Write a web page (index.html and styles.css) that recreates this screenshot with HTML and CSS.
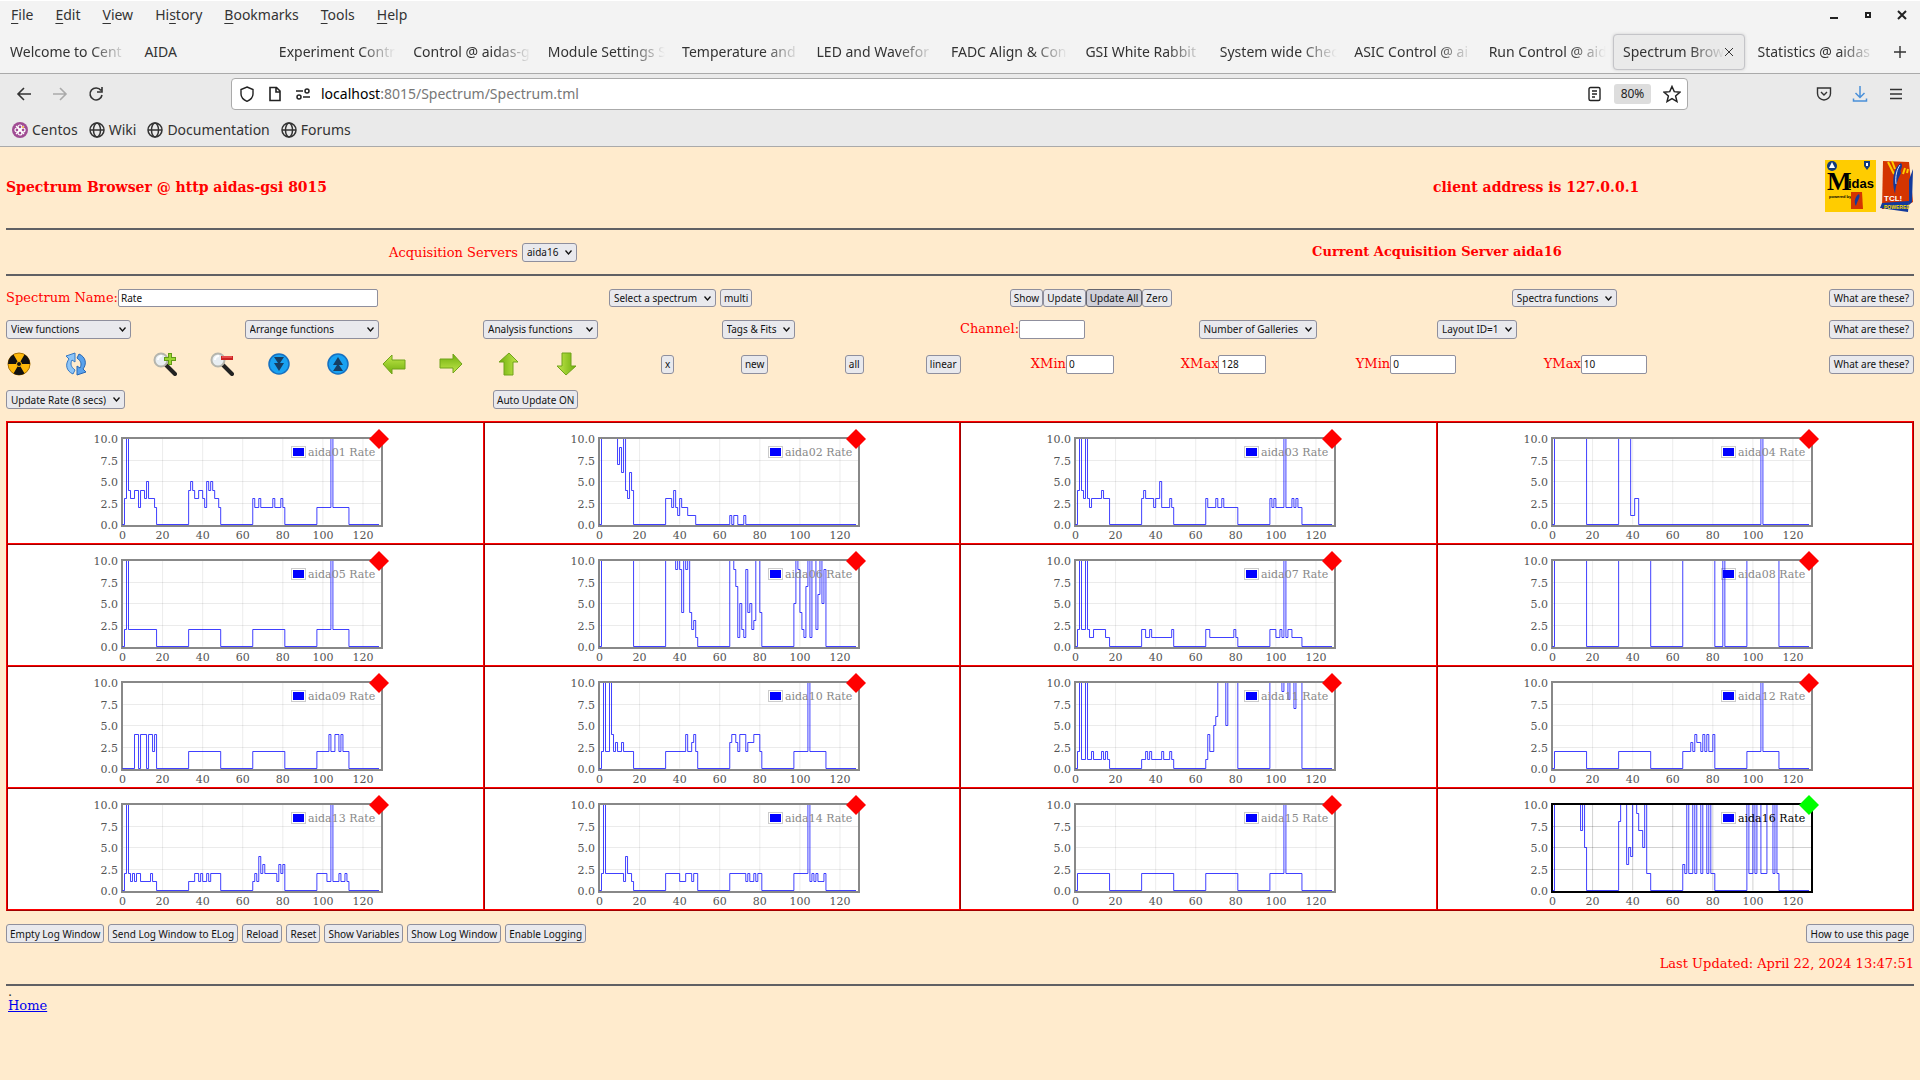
FILE: index.html
```html
<!DOCTYPE html>
<html lang="en">
<head>
<meta charset="utf-8">
<title>Spectrum Browser @ http aidas-gsi 8015</title>
<link rel="stylesheet" href="styles.css">
</head>
<body>
<header class="browser">
  <div class="menubar">
    <nav class="menus">
      <button class="menu"><u>F</u>ile</button>
      <button class="menu"><u>E</u>dit</button>
      <button class="menu"><u>V</u>iew</button>
      <button class="menu">Hi<u>s</u>tory</button>
      <button class="menu"><u>B</u>ookmarks</button>
      <button class="menu"><u>T</u>ools</button>
      <button class="menu"><u>H</u>elp</button>
    </nav>
    <div class="window-controls">
      <button aria-label="Minimize"><svg width="10" height="10"><path d="M1 8h8" stroke="#222" stroke-width="2"/></svg></button>
      <button aria-label="Maximize"><svg width="10" height="10"><rect x="3" y="3" width="4" height="4" fill="#fff" stroke="#222" stroke-width="2"/></svg></button>
      <button aria-label="Close window"><svg width="10" height="10"><path d="M1 1l8 8M9 1l-8 8" stroke="#222" stroke-width="2"/></svg></button>
    </div>
  </div>
  <div class="tabs">
    <div class="tab"><span class="fade">Welcome to Cent</span></div>
    <div class="tab"><span>AIDA</span></div>
    <div class="tab"><span class="fade">Experiment Contr</span></div>
    <div class="tab"><span class="fade">Control @ aidas-g</span></div>
    <div class="tab"><span class="fade">Module Settings S</span></div>
    <div class="tab"><span class="fade">Temperature and</span></div>
    <div class="tab"><span class="fade">LED and Wavefor</span></div>
    <div class="tab"><span class="fade">FADC Align &amp; Con</span></div>
    <div class="tab"><span class="fade">GSI White Rabbit</span></div>
    <div class="tab"><span class="fade">System wide Chec</span></div>
    <div class="tab"><span class="fade">ASIC Control @ ai</span></div>
    <div class="tab"><span class="fade">Run Control @ aid</span></div>
    <div class="tab active"><span class="fade">Spectrum Brow</span><button class="tab-close" aria-label="Close tab"><svg width="8" height="8"><path d="M0 0l8 8M8 0l-8 8" stroke="#333" stroke-width="1"/></svg></button></div>
    <div class="tab"><span class="fade">Statistics @ aidas</span></div>
    <button class="new-tab" aria-label="New tab"><svg width="12" height="12"><path d="M6 0v12M0 6h12" stroke="#333" stroke-width="1.4"/></svg></button>
  </div>
  <div class="toolbar">
    <div class="nav-buttons">
      <button aria-label="Back"><svg width="16" height="16" fill="none" stroke="#333" stroke-width="1.6"><path d="M15 8H2M8 2L2 8l6 6"/></svg></button>
      <button aria-label="Forward"><svg width="16" height="16" fill="none" stroke="#aaa" stroke-width="1.6"><path d="M1 8h13M8 2l6 6-6 6"/></svg></button>
      <button aria-label="Reload"><svg width="16" height="16" fill="none" stroke="#333" stroke-width="1.6"><path d="M13 4.5A6 6 0 1 0 14 9M14 1v5H9"/></svg></button>
    </div>
    <div class="urlbar">
      <svg width="16" height="16" fill="none" stroke="#222" stroke-width="1.4"><path d="M8 1l6 2.500v4.500c0 3-3 6-6 7.300C5 14 2 11 2 8V3.500z"/></svg>
      <svg width="16" height="16" fill="none" stroke="#222" stroke-width="1.600"><path d="M3 1.500h6.500L13 5v9.500H3zM9 2v4h4"/></svg>
      <svg width="16" height="16" fill="none" stroke="#222" stroke-width="1.500"><path d="M1 5h7M8 11h7"/><circle cx="12" cy="5" r="2"/><circle cx="4" cy="11" r="2"/></svg>
      <span class="url"><b>localhost</b>:8015/Spectrum/Spectrum.tml</span>
      <svg width="16" height="16" fill="none" stroke="#222" stroke-width="1.400"><rect x="3" y="1.500" width="11" height="13" rx="1.500"/><path d="M6 5h5M6 8h5M6 11h3"/></svg>
      <button class="zoom">80%</button>
      <svg width="18" height="18" viewBox="0 0 16 16" fill="none" stroke="#222" stroke-width="1.300"><path d="M8 1.300l2 4.600 5 .5-3.800 3.300 1.200 5L8 12.100l-4.400 2.600 1.200-5L1 6.400l5-.5z"/></svg>
    </div>
    <div class="tool-buttons">
      <button aria-label="Pocket"><svg width="16" height="16" fill="none" stroke="#333" stroke-width="1.400"><path d="M1.500 2h13v5.500a6.500 6.500 0 0 1-13 0zM5 6l3 3 3-3"/></svg></button>
      <button aria-label="Downloads"><svg width="16" height="16" fill="none" stroke="#4a90d9" stroke-width="1.500"><path d="M8 0v11M3.500 7L8 11.500 12.500 7M1.500 12.500v2.500h13v-2.500"/></svg></button>
      <button aria-label="Application menu"><svg width="16" height="16" stroke="#333" stroke-width="1.500"><path d="M2 3.500h12M2 8h12M2 12.500h12"/></svg></button>
    </div>
  </div>
  <nav class="bookmarks">
    <a href="#"><svg width="16" height="16"><circle cx="8" cy="8" r="8" fill="#a04c93"/><g fill="none" stroke="#fff" stroke-width="1.200"><circle cx="8" cy="5" r="2"/><circle cx="8" cy="11" r="2"/><circle cx="5" cy="8" r="2"/><circle cx="11" cy="8" r="2"/><path d="M4 4l8 8M12 4l-8 8"/></g><circle cx="11" cy="5" r="1" fill="#f2b632"/></svg>Centos</a>
    <a href="#"><svg class="globe" width="16" height="16"><use href="#globe"/></svg>Wiki</a>
    <a href="#"><svg class="globe" width="16" height="16"><use href="#globe"/></svg>Documentation</a>
    <a href="#"><svg class="globe" width="16" height="16"><use href="#globe"/></svg>Forums</a>
  </nav>
</header>

<svg class="defs" width="0" height="0" aria-hidden="true">
  <defs>
    <symbol id="globe" viewBox="0 0 16 16"><g fill="none" stroke="#333" stroke-width="1.500"><circle cx="8" cy="8" r="7"/><ellipse cx="8" cy="8" rx="3.500" ry="7"/><path d="M1 8h14"/></g></symbol>
    <linearGradient id="green" x1="0" y1="0" x2="0" y2="1"><stop offset="0" stop-color="#c3e84c"/><stop offset="1" stop-color="#6fae0c"/></linearGradient>
    <symbol id="arrow" viewBox="0 0 24 24"><path d="M1 12L10 3v5h13v9H10v5z" fill="url(#green)" stroke="#71a31b"/></symbol>
    <symbol id="disc" viewBox="0 0 24 24"><circle cx="12" cy="12" r="10" fill="#19a2f2" stroke="#1670c0" stroke-width="1.500"/><path d="M7 5h10l-4 6h4l-5 8-5-8h4z" fill="#163e63"/></symbol>
    <symbol id="lens" viewBox="0 0 24 24"><path d="M13 13l9 9" stroke="#222" stroke-width="4" stroke-linecap="round"/><circle cx="8" cy="8" r="6.500" fill="#e8eef2" stroke="#b5b5ad" stroke-width="2"/><path d="M5 8a4 4 0 0 1 4-4" stroke="#fff" stroke-width="2" fill="none"/></symbol>
  </defs>
</svg>

<main class="page">
  <div class="title-row">
    <h1>Spectrum Browser @ http aidas-gsi 8015</h1>
    <h2>client address is 127.0.0.1</h2>
    <div class="logos">
      <svg width="51" height="52" viewBox="0 0 51 52">
        <rect width="51" height="52" fill="#fc0"/>
        <circle cx="7" cy="6" r="5" fill="#123a7c"/><path d="M4 8h6L7 2z" fill="#fff"/>
        <path d="M39 1h6v5l-3 4-3-4z" fill="#123a7c"/><path d="M41 3h2v3h-2z" fill="#fff"/>
        <text x="2" y="30" class="midas-m">M</text><text x="23" y="28" class="midas-rest">idas</text>
        <text x="4" y="38" class="midas-small">powered by</text>
        <path d="M26 32h11l1 17H26z" fill="#d43500"/><path d="M31 46c-3-4 0-11 3-12 2 3-2 7-3 12z" fill="#123a9c"/>
      </svg>
      <svg width="34" height="52" viewBox="0 0 34 52">
        <path d="M3 1l26 1 4 40-13 7H2z" fill="#d43500"/><path d="M33 9l-1 33-3 3V20z" fill="#123a9c"/>
        <path d="M2 43l27-2-1 11L0 48z" fill="#123a9c"/>
        <path d="M8 2l6 12M12 1l3 8M25 8l-2 6M28 9l-1 4" stroke="#fc0" stroke-width="2"/>
        <path d="M15 34C11 20 14 7 21 3c3 4-2 7 0 10-3 6-5 10-6 21z" fill="#123a9c"/><path d="M16 24C15 16 17 9 20 5" stroke="#d5e1ff" fill="none"/>
        <text x="4" y="41" class="tcl">TCL!</text><text x="4" y="49" class="powered">POWERED</text>
      </svg>
    </div>
  </div>
  <hr>
  <div class="servers">
    <div><label for="server">Acquisition Servers</label> <select id="server"><option>aida16</option></select></div>
    <div><strong>Current Acquisition Server aida16</strong></div>
  </div>
  <hr>

  <form class="controls">
    <div class="row row-spectrum">
      <div><label for="name">Spectrum Name:</label><input id="name" class="name-input" value="Rate"></div>
      <div class="spaced"><select aria-label="Spectrum"><option>Select a spectrum</option></select><button type="button">multi</button></div>
      <div><button type="button">Show</button><button type="button">Update</button><button type="button" class="pressed">Update All</button><button type="button">Zero</button></div>
      <div><select aria-label="Spectra functions"><option>Spectra functions</option></select></div>
      <div><button type="button" class="about">What are these?</button></div>
    </div>
    <div class="row row-functions">
      <div><select class="view" aria-label="View functions"><option>View functions</option></select></div>
      <div><select class="arrange" aria-label="Arrange functions"><option>Arrange functions</option></select></div>
      <div><select class="analysis" aria-label="Analysis functions"><option>Analysis functions</option></select></div>
      <div><select aria-label="Tags and fits"><option>Tags &amp; Fits</option></select></div>
      <div><label for="channel">Channel:</label><input id="channel" class="wide"></div>
      <div><select aria-label="Number of galleries"><option>Number of Galleries</option></select></div>
      <div><select aria-label="Layout"><option>Layout ID=1</option></select></div>
      <div class="end"><button type="button" class="about">What are these?</button></div>
    </div>
    <div class="row row-icons">
      <div><button type="button" class="icon" aria-label="Start"><svg width="24" height="24"><circle cx="12" cy="12" r="11" fill="#ffb90a" stroke="#a86f00"/><path d="M12 12L1 12A11 11 0 0 1 6.500 2.500zM12 12L17.500 2.500A11 11 0 0 1 23 12zM12 12L17.500 21.500A11 11 0 0 1 6.500 21.500z" fill="#111"/><circle cx="12" cy="12" r="2.500" fill="#111" stroke="#ffb90a"/></svg></button></div>
      <div><button type="button" class="icon" aria-label="Refresh"><svg width="24" height="24"><path d="M9 22C2 19 1 12 5 7L2 4l9-3v9L8 8c-2 4-1 7 3 10z" fill="#8ec5f7" stroke="#3578c4"/><path d="M15 2c7 3 8 10 4 15l3 3-9 3v-9l3 2c2-4 1-7-3-10z" fill="#5aa2ec" stroke="#2866b2"/></svg></button></div>
      <div><button type="button" class="icon" aria-label="Zoom in"><svg width="24" height="24"><use href="#lens"/><path d="M17 1v12M11 7h12" stroke="#629b17" stroke-width="4"/><path d="M17 2v10M12 7h10" stroke="#9bd531" stroke-width="2"/></svg></button></div>
      <div><button type="button" class="icon" aria-label="Zoom out"><svg width="24" height="24"><use href="#lens"/><path d="M11 6h12" stroke="#c22" stroke-width="4"/><path d="M12 5h10" stroke="#f77" stroke-width="1"/></svg></button></div>
      <div><button type="button" class="icon" aria-label="Compress"><svg width="24" height="24"><use href="#disc"/></svg></button></div>
      <div><button type="button" class="icon flip" aria-label="Expand"><svg width="24" height="24"><use href="#disc"/></svg></button></div>
      <div><button type="button" class="icon" aria-label="Left"><svg width="24" height="24"><use href="#arrow"/></svg></button></div>
      <div><button type="button" class="icon turn-right" aria-label="Right"><svg width="24" height="24"><use href="#arrow"/></svg></button></div>
      <div><button type="button" class="icon turn-up" aria-label="Up"><svg width="24" height="24"><use href="#arrow"/></svg></button></div>
      <div><button type="button" class="icon turn-down" aria-label="Down"><svg width="24" height="24"><use href="#arrow"/></svg></button></div>
      <div><button type="button">x</button></div>
      <div><button type="button">new</button></div>
      <div><button type="button">all</button></div>
      <div><button type="button">linear</button></div>
      <div><label for="xmin">XMin</label><input id="xmin" value="0"></div>
      <div><label for="xmax">XMax</label><input id="xmax" value="128"></div>
      <div><label for="ymin">YMin</label><input id="ymin" class="wide" value="0"></div>
      <div><label for="ymax">YMax</label><input id="ymax" class="wide" value="10"></div>
      <div class="end"><button type="button" class="about">What are these?</button></div>
    </div>
    <div class="row row-update">
      <div><select aria-label="Update rate"><option>Update Rate (8 secs)</option></select></div>
      <div><button type="button">Auto Update ON</button></div>
    </div>
  </form>

  <section class="gallery" id="gallery" aria-label="Spectra"></section>

  <div class="log-row">
    <button>Empty Log Window</button>
    <button>Send Log Window to ELog</button>
    <button>Reload</button>
    <button>Reset</button>
    <button>Show Variables</button>
    <button>Show Log Window</button>
    <button>Enable Logging</button>
    <button class="help">How to use this page</button>
  </div>
  <p class="updated">Last Updated: April 22, 2024 13:47:51</p>
  <hr>
  <footer class="foot"><div class="dot">.</div><a href="#">Home</a></footer>
</main>
<script src="gallery.js"></script>
</body>
</html>
```
FILE: styles.css
```css
* { box-sizing: border-box; }
body { margin: 0; min-height: 100vh; background: #ffebcd; font: 13px/16px "DejaVu Serif", serif; color: #f00; }
button, select, input { margin: 0; font: 10px/14px "Noto Sans", sans-serif; color: #111; }
svg { display: block; flex: none; }
.defs { position: absolute; }

/* Browser window */
.browser { font: 14px/20px "Noto Sans", sans-serif; color: #333; background: #f3f3f3; border-bottom: 1px solid #aaa; }
.browser button { font: inherit; color: inherit; border: 0; padding: 0; background: none; }
.menubar { height: 31px; display: flex; align-items: center; justify-content: space-between; border-top: 1px solid #fff; padding: 0 13px 2px 0; }
.menus { display: flex; }
.browser .menu { padding: 0 11px; }
.menu u { text-underline-offset: 3px; }
.window-controls { display: flex; gap: 24px; }
.tabs { height: 43px; display: flex; align-items: center; border-bottom: 1px solid #aaa; padding: 0 14px 0 0; }
.tab { flex: 1 1 0; min-width: 0; height: 36px; display: flex; align-items: center; padding: 0 4px 0 9px; margin-right: 2px; border: 1px solid transparent; border-radius: 4px; }
.tab span { flex: 1; min-width: 0; overflow: hidden; white-space: nowrap; }
.tab .fade { mask-image: linear-gradient(to left, transparent, #000 36px); }
.tab.active { background: #eaeaea; border-color: #c4c4c8; box-shadow: 0 0 3px #ccc; }
.browser .tab-close { flex: none; padding-right: 7px; }
.new-tab { flex: none; margin-left: 12px; }
.toolbar { height: 40px; display: flex; align-items: center; background: #eaeaea; padding: 0 16px; }
.nav-buttons { display: flex; gap: 20px; flex: 0 0 215px; }
.urlbar { flex: 1; height: 32px; display: flex; align-items: center; gap: 12px; background: #fff; border: 1px solid #aaa; border-radius: 4px; padding: 0 6px 0 7px; }
.url { flex: 1; margin-left: -2px; color: #777; }
.url b { color: #000; font-weight: 400; }
.urlbar .zoom { width: 37px; height: 20px; font-size: 12px; line-height: 20px; background: #ddd; border-radius: 3px; color: #222; }
.tool-buttons { display: flex; gap: 20px; justify-content: flex-end; flex: 0 0 216px; }
.bookmarks { height: 32px; display: flex; align-items: center; gap: 11px; background: #eaeaea; padding: 0 12px; }
.bookmarks a { display: flex; align-items: center; gap: 4px; color: inherit; text-decoration: none; }

/* Page */
.page { padding: 0 6px; }
hr { margin: 0; border: 0; height: 2px; background: #606064; }
.title-row { height: 81px; display: grid; grid-template-columns: 1427fr 392fr 89px; align-items: center; padding-bottom: 2px; }
h1, h2 { margin: 0; font-size: 14px; line-height: 20px; }
.logos { display: flex; gap: 4px; padding-bottom: 2px; }
.midas-m { font: bold 26px "Liberation Serif", serif; }
.midas-rest { font: bold 13px "Liberation Sans", sans-serif; }
.midas-small { font: bold 4px "Liberation Sans", sans-serif; }
.tcl { font: bold 8px "Liberation Sans", sans-serif; fill: #fff; }
.powered { font: bold 5px "Liberation Sans", sans-serif; fill: #fd0; }
.servers { height: 44px; display: grid; grid-template-columns: 1fr 1fr; align-items: center; text-align: center; }

.page button, .page select { height: 19px; border: 1px solid #8f8f9d; border-radius: 3px; background: #e9e9ed; padding: 0 3px; white-space: nowrap; }
.page select { appearance: none; padding: 0 17px 0 4px; background: #e9e9ed url("data:image/svg+xml,%3Csvg xmlns='http://www.w3.org/2000/svg' width='7' height='5'%3E%3Cpath d='M.5 .5l3 3.500 3-3.500' fill='none' stroke='%23111' stroke-width='1.300'/%3E%3C/svg%3E") no-repeat right 4px center; }
.page .pressed { background: #cfcfd8; border-color: #66666f; }
.page .about, .page .help { padding: 0 4px; }
.page input { width: 48px; height: 19px; border: 1px solid #8f8f9d; border-radius: 2px; background: #fff; padding: 0 2px; }
.page input.wide { width: 66px; }
.page input.name-input { width: 260px; }
.page .icon { height: 24px; border: 0; padding: 0; background: none; }
.flip { transform: scaleY(-1); }
.turn-right { transform: rotate(180deg); }
.turn-up { transform: rotate(90deg); }
.turn-down { transform: rotate(-90deg); }

.controls { padding-top: 6px; }
.row { display: grid; align-items: center; white-space: nowrap; }
.row > div { display: flex; align-items: center; min-width: 0; }
.row > .end { justify-content: flex-end; }
.row > .spaced { gap: 4px; }
.row-spectrum { height: 32px; grid-template-columns: 603fr 401fr 502fr 317fr auto; }
.row-spectrum button, .row-spectrum select, .row-spectrum input { height: 18px; }
.row-functions { height: 30px; grid-template-columns: repeat(8, minmax(0, 1fr)); }
.row-icons { height: 40px; padding-left: 1px; grid-template-columns: 57fr 89fr 57fr 57fr 59fr 56fr 57fr 58fr 57fr 107fr 80fr 104fr 81fr 105fr 150fr 175fr 188fr 285fr auto; }
.row-update { height: 31px; grid-template-columns: 487fr 1421fr; }
.page .view { width: 125px; }
.page .arrange { width: 134px; }
.page .analysis { width: 115px; }

.gallery { display: grid; grid-template-columns: repeat(4, minmax(0, 1fr)); margin-top: 6px; background: #fff; border: 1px solid; border-color: #f00 #a00000 #a00000 #f00; }
.cell { height: 122px; display: flex; justify-content: center; border: 1px solid; border-color: #a00000 #f00 #f00 #a00000; }
.cell text { font: 11px "DejaVu Serif", serif; fill: #545454; }
.cell .legend { fill: #888; }
.cell .frame { fill: none; stroke: #888; stroke-width: 2; }
.cell .grid { stroke: #000; stroke-opacity: .08; fill: none; }
.cell .trace { fill: none; stroke: #00f; stroke-opacity: .75; }
.cell .swatch-box { fill: #fff; stroke: #ccc; }
.cell .swatch { fill: #00f; }
.cell .marker { fill: #f00; }
.cell.current .legend { fill: #000; }
.cell.current .frame { stroke: #000; }
.cell.current .grid { stroke-opacity: .18; }
.cell.current .marker { fill: #0f0; }

.log-row { display: flex; gap: 4px; margin-top: 13px; }
.log-row .help { margin-left: auto; }
.updated { margin: 0; line-height: 41px; text-align: right; }
.foot { padding: 0 2px; color: #333; }
.dot { line-height: 12px; }
.foot a { color: #00e; }
```
FILE: gallery.js
```js
// Each spectrum is a list of "channel:counts" steps, held until the next step.
const spectra = [
  "1:3 2:12 3:4 4:3 6:4 8:2 9:4 11:3 12:5 13:3 16:2 17:0 33:4 34:5 35:4 36:3 38:4 40:3 41:2 42:5 43:4 44:5 45:4 46:3 48:2 49:0 65:3 66:2 68:3 69:2 75:3 76:2 79:3 80:2 81:0 97:2 104:12 105:2 113:0",
  "1:12 9:7 10:9 11:6 12:12 13:4 14:3 15:6 16:4 17:0 33:3 36:2 37:4 38:2 39:1 40:3 41:2 44:1 48:0 65:1 66:0 67:1 69:0 72:1 73:0",
  "1:4 2:12 3:4 4:3 5:12 6:3 7:2 8:3 13:4 14:3 17:0 33:3 34:4 35:3 39:2 40:3 42:5 43:2 47:3 48:2 49:0 65:3 66:2 70:3 71:2 73:3 74:2 81:0 97:3 98:2 99:3 100:2 104:12 105:2 108:3 109:2 110:3 111:2 113:0",
  "1:12 17:0 33:12 39:1 41:3 43:0 104:12 105:0",
  "1:2 2:12 3:2 17:0 33:2 49:0 65:2 81:0 97:2 104:12 105:2 113:0",
  "1:12 17:0 33:12 38:9 39:12 40:9 41:4 42:12 43:9 44:12 45:4 46:2 47:3 48:1 49:0 65:12 67:9 68:7 69:1 70:5 71:2 72:1 73:9 74:4 75:5 76:2 77:3 78:12 80:4 81:0 97:5 98:12 99:9 100:4 101:2 102:1 103:7 104:12 105:1 106:12 108:2 109:6 110:12 111:5 112:9 113:0",
  "1:2 2:12 3:2 5:12 6:2 7:1 9:2 15:1 17:0 33:2 35:1 37:2 38:1 48:2 49:0 65:2 67:1 79:2 80:1 81:0 97:2 100:1 102:2 103:1 104:12 105:1 106:2 108:1 113:0",
  "1:12 17:0 33:12 49:0 65:12 81:0 85:12 86:0 97:12 113:0",
  "6:4 8:0 9:4 12:0 13:4 15:2 16:4 17:0 33:2 49:0 65:2 81:0 97:2 103:4 104:2 106:4 108:2 109:4 110:2 113:0",
  "1:2 2:12 3:2 5:12 6:4 7:2 8:3 9:2 11:3 12:2 17:0 33:2 43:4 44:2 46:3 47:4 48:2 49:0 65:3 66:4 68:3 69:2 70:4 73:2 74:3 77:4 80:2 81:0 97:2 104:12 105:2 113:0",
  "1:2 2:12 3:1 5:12 6:1 8:2 9:1 13:2 14:1 15:2 16:1 17:0 33:1 35:2 36:1 37:2 38:1 43:2 44:1 47:2 48:1 49:0 65:1 66:4 67:2 69:5 70:6 71:12 75:5 76:12 81:0 97:12 103:9 104:12 106:8 107:12 109:7 110:12 113:0",
  "1:2 17:0 33:2 49:0 65:2 69:3 70:2 71:4 72:3 74:2 75:4 76:2 77:4 78:2 80:4 81:0 97:2 104:12 105:2 113:0",
  "1:2 2:12 3:2 4:1 5:2 6:1 7:2 9:1 14:2 15:1 17:0 33:1 36:2 38:1 39:2 40:1 42:2 43:1 44:2 49:0 65:1 66:2 67:1 68:4 69:2 70:3 71:2 77:1 78:3 79:2 80:3 81:0 97:2 102:1 104:12 105:1 108:2 109:1 111:2 112:1 113:0",
  "1:2 2:12 3:2 12:1 13:4 14:2 16:1 17:0 33:2 40:1 43:2 46:1 47:2 49:0 65:2 73:1 74:2 75:1 77:2 78:1 79:2 81:0 97:2 104:12 105:1 106:2 107:1 108:2 109:1 112:2 113:0",
  "1:2 17:0 33:2 49:0 65:2 81:0 97:2 104:12 105:2 113:0",
  "1:12 14:7 15:12 16:5 17:0 33:8 34:12 37:3 38:5 39:4 40:12 42:9 43:7 45:5 46:12 47:2 49:0 65:3 66:2 67:12 68:2 70:12 71:2 72:12 74:2 75:12 77:2 78:12 79:2 81:0 97:12 98:2 100:12 101:2 102:12 104:2 107:12 110:2 111:12 112:2 113:0"
];

const LEFT = 28.5, TOP = 15.5, HEIGHT = 86, CHANNEL = 2.004;
const px = channel => LEFT + channel * CHANNEL;
const py = counts => Math.round(HEIGHT - counts * HEIGHT / 10) + TOP;

function trace(steps) {
  let d = `M${px(0)} ${py(0)}`;
  for (const step of steps.split(" ")) {
    const [channel, counts] = step.split(":").map(Number);
    d += `H${px(channel)}V${py(counts)}`;
  }
  return d + `H${px(128)}`;
}

function chart(steps, index) {
  const name = "aida" + String(index + 1).padStart(2, "0") + " Rate";
  let grid = "", labels = "";
  for (let x = 0; x <= 120; x += 20) {
    if (x) grid += `M${px(x)} ${py(10)}V${py(0)}`;
    labels += `<text x="${px(x)}" y="116" text-anchor="middle">${x}</text>`;
  }
  for (let y = 0; y <= 10; y += 2.5) {
    if (y) grid += `M${px(0)} ${py(y)}H287`;
    labels += `<text x="24" y="${py(y) + 4}" text-anchor="end">${y.toFixed(1)}</text>`;
  }
  const clip = "plot" + index;
  return `<svg width="302" height="120" role="img" aria-label="${name}">
    <clipPath id="${clip}"><rect x="28" y="16" width="260" height="87"/></clipPath>
    <path class="grid" d="${grid}"/>
    <rect class="frame" x="28" y="15" width="260" height="88"/>
    <rect class="swatch-box" x="197.5" y="23.5" width="14" height="11"/><rect class="swatch" x="199" y="25" width="11" height="8"/>
    <g clip-path="url(#${clip})"><path class="trace" d="${trace(steps)}"/></g>
    ${labels}
    <text class="legend" x="214" y="33">${name}</text>
    <path class="marker" d="M285 6l10 10-10 10-10-10z"/>
  </svg>`;
}

document.getElementById("gallery").innerHTML = spectra.map((steps, i) =>
  `<div class="cell${i === spectra.length - 1 ? " current" : ""}">${chart(steps, i)}</div>`).join("");
```
